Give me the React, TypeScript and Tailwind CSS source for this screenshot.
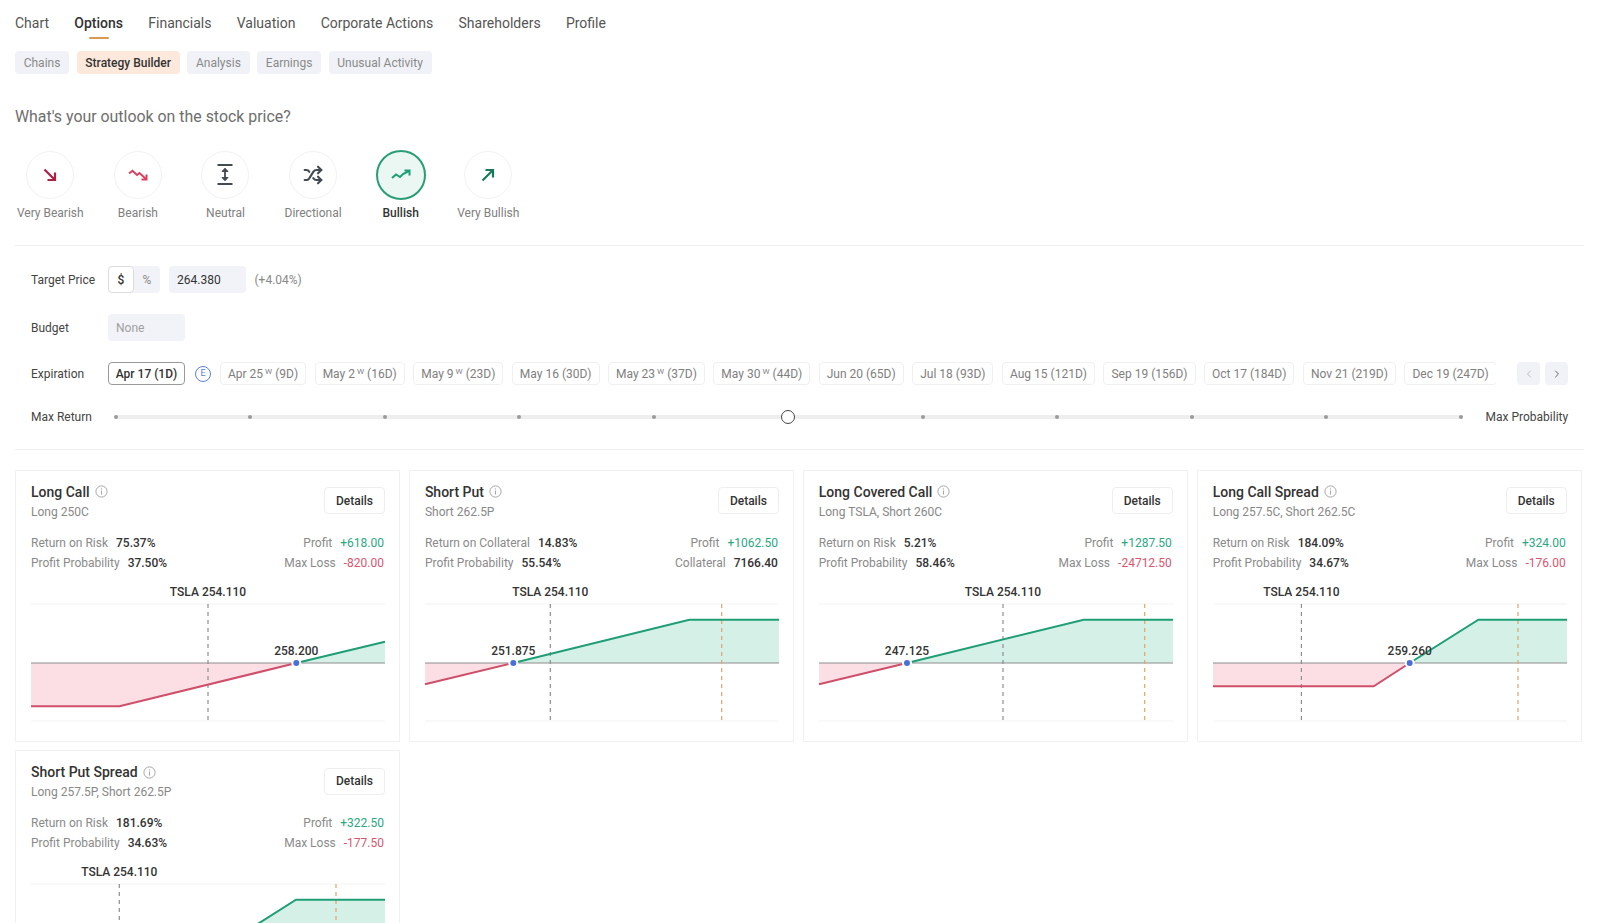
import React from "react";
import { Shuffle, ChevronLeft, ChevronRight } from "lucide-react";

type Pt = [number, number];
type CardData = {
  title: string;
  sub: string;
  m1: [string, string];
  m2: [string, string];
  r1: [string, string];
  r2: [string, string, "red" | "dark"];
  line: number;
  orange?: number;
  be: number;
  beText?: string;
  loss: Pt[];
  profit: Pt[];
};

const cards: CardData[] = [
  {
    title: "Long Call", sub: "Long 250C",
    m1: ["Return on Risk", "75.37%"], m2: ["Profit Probability", "37.50%"],
    r1: ["Profit", "+618.00"], r2: ["Max Loss", "-820.00", "red"],
    line: 177, be: 265.3, beText: "258.200",
    loss: [[0, 102.3], [88.5, 102.3], [265.3, 59]], profit: [[265.3, 59], [354, 37.7]],
  },
  {
    title: "Short Put", sub: "Short 262.5P",
    m1: ["Return on Collateral", "14.83%"], m2: ["Profit Probability", "55.54%"],
    r1: ["Profit", "+1062.50"], r2: ["Collateral", "7166.40", "dark"],
    line: 125.3, orange: 296.7, be: 88.3, beText: "251.875",
    loss: [[0, 80.3], [88.3, 59]], profit: [[88.3, 59], [264.3, 15.7], [354, 15.7]],
  },
  {
    title: "Long Covered Call", sub: "Long TSLA, Short 260C",
    m1: ["Return on Risk", "5.21%"], m2: ["Profit Probability", "58.46%"],
    r1: ["Profit", "+1287.50"], r2: ["Max Loss", "-24712.50", "red"],
    line: 184, orange: 325.7, be: 88, beText: "247.125",
    loss: [[0, 80.3], [88, 59]], profit: [[88, 59], [264.7, 15.7], [354, 15.7]],
  },
  {
    title: "Long Call Spread", sub: "Long 257.5C, Short 262.5C",
    m1: ["Return on Risk", "184.09%"], m2: ["Profit Probability", "34.67%"],
    r1: ["Profit", "+324.00"], r2: ["Max Loss", "-176.00", "red"],
    line: 88.4, orange: 305, be: 196.7, beText: "259.260",
    loss: [[0, 82.3], [160.7, 82.3], [196.7, 59]], profit: [[196.7, 59], [265.4, 15.7], [354, 15.7]],
  },
  {
    title: "Short Put Spread", sub: "Long 257.5P, Short 262.5P",
    m1: ["Return on Risk", "181.69%"], m2: ["Profit Probability", "34.63%"],
    r1: ["Profit", "+322.50"], r2: ["Max Loss", "-177.50", "red"],
    line: 88.3, orange: 305, be: 196.7,
    loss: [[0, 82.3], [160.7, 82.3], [196.7, 59]], profit: [[196.7, 59], [265, 15.7], [354, 15.7]],
  },
];

const fillPts = (p: Pt[]) =>
  [...p, [p[p.length - 1][0], 59] as Pt, [p[0][0], 59] as Pt].map((a) => a.join(",")).join(" ");
const linePts = (p: Pt[]) => p.map((a) => a.join(",")).join(" ");

function Chart({ c }: { c: CardData }) {
  const top = 20;
  const Y = (y: number) => y + top;
  return (
    <svg width="354" height="138" viewBox="0 0 354 138" className="mt-[11px] block overflow-visible">
      <g transform={`translate(0 ${top})`}>
        <line x1="0" x2="354" y1="0" y2="0" stroke="#f3f3f3" />
        <line x1="0" x2="354" y1="117" y2="117" stroke="#f3f3f3" />
        <polygon points={fillPts(c.loss)} fill="#fbdfe4" />
        <polygon points={fillPts(c.profit)} fill="#d5f0e6" />
        <line x1="0" x2="354" y1="59" y2="59" stroke="#8c8c8c" strokeWidth="1" />
        <line x1={c.line} x2={c.line} y1="0" y2="116" stroke="#8d8d96" strokeWidth="1.2" strokeDasharray="4 4" />
        {c.orange !== undefined && (
          <line x1={c.orange} x2={c.orange} y1="0" y2="118" stroke="#e2a565" strokeWidth="1.2" strokeDasharray="4 4" />
        )}
        <polyline points={linePts(c.loss)} fill="none" stroke="#cf4f6b" strokeWidth="2" />
        <polyline points={linePts(c.profit)} fill="none" stroke="#1f9e76" strokeWidth="2" />
        <circle cx={c.be} cy="59" r="5" fill="#ffffff" />
        <circle cx={c.be} cy="59" r="3" fill="#4a6fd8" />
        {c.beText && (
          <text x={c.be} y="50.5" textAnchor="middle" fontSize="12" fontWeight="500" fill="#333333" fontFamily="Roboto, sans-serif">
            {c.beText}
          </text>
        )}
      </g>
      <text x={c.line} y={Y(-8.3)} textAnchor="middle" fontSize="12" fontWeight="500" fill="#333333" fontFamily="Roboto, sans-serif">
        TSLA 254.110
      </text>
    </svg>
  );
}

function InfoIcon() {
  return (
    <svg width="13" height="13" viewBox="0 0 13 13" className="shrink-0">
      <circle cx="6.5" cy="6.5" r="5.6" fill="none" stroke="#a6a6a6" strokeWidth="1" />
      <line x1="6.5" x2="6.5" y1="5.6" y2="9.6" stroke="#a6a6a6" strokeWidth="1" />
      <circle cx="6.5" cy="3.9" r="0.7" fill="#a6a6a6" />
    </svg>
  );
}

function Metric({ a, tone }: { a: [string, string]; tone: string }) {
  return (
    <span className="flex gap-[8px]">
      <span className="text-[#8a8a8a]">{a[0]}</span>
      <span className={tone}>{a[1]}</span>
    </span>
  );
}

function Card({ c }: { c: CardData }) {
  return (
    <div className="w-[385px] border border-[#f1f1f1] bg-white pl-[15px] pr-[14px] pt-[11px] pb-[19px]">
      <div className="flex items-center justify-between">
        <div>
          <div className="flex h-[20px] items-center gap-[5px] text-[14px] leading-[20px] font-medium text-[#333333]">
            {c.title}
            <InfoIcon />
          </div>
          <div className="mt-[2px] text-[12px] leading-[16px] text-[#888888]">{c.sub}</div>
        </div>
        <button className="flex h-[27px] w-[61px] items-center justify-center rounded-[4px] border border-[#eeeeee] bg-white text-[12px] font-medium text-[#333333]">
          Details
        </button>
      </div>
      <div className="mt-[13px] flex items-start justify-between text-[12px] leading-[20px]">
        <div>
          <Metric a={c.m1} tone="font-medium text-[#333333]" />
          <Metric a={c.m2} tone="font-medium text-[#333333]" />
        </div>
        <div className="mr-[1px] flex flex-col items-end">
          <Metric a={c.r1} tone="text-[#2aa87f]" />
          <Metric a={[c.r2[0], c.r2[1]]} tone={c.r2[2] === "red" ? "text-[#d9566f]" : "font-medium text-[#333333]"} />
        </div>
      </div>
      <Chart c={c} />
    </div>
  );
}

const outlooks: { label: string; icon: React.ReactNode; active?: boolean }[] = [
  {
    label: "Very Bearish",
    icon: (
      <svg width="14" height="14" viewBox="0 0 14 14" fill="none" stroke="#b01e45" strokeWidth="2.2">
        <path d="M1.5 1.5 L12 12 M12 4.5 V12 H4.5" />
      </svg>
    ),
  },
  {
    label: "Bearish",
    icon: (
      <svg width="20" height="12" viewBox="0 0 20 12" fill="none" stroke="#d8405f" strokeWidth="2">
        <path d="M1 4.5 L4.5 1.8 L9 6 L11.5 4 L18 10" />
        <path d="M18.5 5.5 V10.5 H13.5" />
      </svg>
    ),
  },
  {
    label: "Neutral",
    icon: (
      <svg width="16" height="21" viewBox="0 0 16 21" fill="none" stroke="#444a52" strokeWidth="1.8">
        <path d="M0.5 1 H15.5 M0.5 20 H15.5 M8 6 V15" />
        <path d="M5 7.5 L8 4.2 L11 7.5 Z M5 13.5 L8 16.8 L11 13.5 Z" fill="#444a52" strokeWidth="1" />
      </svg>
    ),
  },
  { label: "Directional", icon: <Shuffle size={20} strokeWidth={2.5} color="#444a52" /> },
  {
    label: "Bullish",
    active: true,
    icon: (
      <svg width="20" height="12" viewBox="0 0 20 12" fill="none" stroke="#1f9e76" strokeWidth="2">
        <path d="M1 9 L5 5.5 L9 8 L12 5 L18 2" />
        <path d="M13.5 1.5 H18.5 V6.5" />
      </svg>
    ),
  },
  {
    label: "Very Bullish",
    icon: (
      <svg width="14" height="14" viewBox="0 0 14 14" fill="none" stroke="#157a5c" strokeWidth="2.2">
        <path d="M1.5 12.5 L12 2 M4.5 2 H12 V9.5" />
      </svg>
    ),
  },
];

const exps: [string, boolean, string][] = [
  ["Apr 25", true, "(9D)"],
  ["May 2", true, "(16D)"],
  ["May 9", true, "(23D)"],
  ["May 16", false, "(30D)"],
  ["May 23", true, "(37D)"],
  ["May 30", true, "(44D)"],
  ["Jun 20", false, "(65D)"],
  ["Jul 18", false, "(93D)"],
  ["Aug 15", false, "(121D)"],
  ["Sep 19", false, "(156D)"],
  ["Oct 17", false, "(184D)"],
  ["Nov 21", false, "(219D)"],
  ["Dec 19", false, "(247D)"],
];

const tabs = ["Chart", "Options", "Financials", "Valuation", "Corporate Actions", "Shareholders", "Profile"];
const pills = ["Chains", "Strategy Builder", "Analysis", "Earnings", "Unusual Activity"];

export default function App() {
  return (
    <div className="h-[923px] w-[1600px] overflow-hidden bg-white pl-[15px] font-[family-name:Roboto,sans-serif] text-[12px] text-[#333333]">
      <nav className="flex gap-[25.25px]">
        {tabs.map((t) => (
          <div
            key={t}
            className={`relative h-[39px] pt-[13px] text-[14px] leading-[20px] ${t === "Options" ? "font-medium text-[#333333]" : "text-[#555555]"}`}
          >
            {t}
            {t === "Options" && (
              <span className="absolute bottom-0 left-1/2 h-[2px] w-[20px] -translate-x-1/2 rounded-full bg-[#d99a4e]" />
            )}
          </div>
        ))}
      </nav>

      <div className="mt-[12px] flex gap-[7.6px]">
        {pills.map((p) => (
          <div
            key={p}
            className={`flex h-[23px] items-center rounded-[4px] px-[8.7px] text-[12px] ${p === "Strategy Builder" ? "bg-[#fde9dc] font-medium text-[#333333]" : "bg-[#f0f2f7] text-[#8a8a8a]"}`}
          >
            {p}
          </div>
        ))}
      </div>

      <h2 className="mt-[31px] text-[15.9px] leading-[24px] font-normal text-[#6e6e6e]">What's your outlook on the stock price?</h2>

      <div className="mt-[21.5px] -ml-[8.5px] flex">
        {outlooks.map((o) => (
          <div key={o.label} className="flex w-[87.6px] flex-col items-center">
            <div
              className={`flex items-center justify-center rounded-full ${o.active ? "h-[50px] w-[50px] -my-[1px] border-2 border-[#2a9d78] bg-[#eaf7f2]" : "h-[48px] w-[48px] border border-[#f2f2f2] bg-white"}`}
            >
              {o.icon}
            </div>
            <div className={`mt-[6.5px] text-[12px] leading-[16px] whitespace-nowrap ${o.active ? "font-medium text-[#333333]" : "text-[#808080]"}`}>
              {o.label}
            </div>
          </div>
        ))}
      </div>

      <div className="mt-[24px] h-px w-[1569px] bg-[#f0f0f0]" />

      <div className="mt-[20px] pl-[16px]">
        <div className="flex h-[27px] items-center">
          <div className="w-[77px] text-[#444444]">Target Price</div>
          <div className="flex h-[27px] w-[52px] rounded-[4px] bg-[#f1f3f8]">
            <div className="flex w-[26px] items-center justify-center rounded-[4px] border border-[#dddddd] bg-white font-medium text-[#333333]">$</div>
            <div className="flex w-[26px] items-center justify-center text-[#8a8a8a]">%</div>
          </div>
          <div className="ml-[9px] flex h-[27px] w-[77px] items-center rounded-[4px] bg-[#f1f3f8] pl-[8px] text-[#333333]">264.380</div>
          <div className="ml-[8.5px] text-[#888888]">(+4.04%)</div>
        </div>

        <div className="mt-[21px] flex h-[27px] items-center">
          <div className="w-[77px] text-[#444444]">Budget</div>
          <div className="flex h-[27px] w-[77px] items-center rounded-[4px] bg-[#f1f3f8] pl-[8px] text-[#a0a0a0]">None</div>
        </div>

        <div className="mt-[21px] flex h-[23px] items-center">
          <div className="w-[77px] text-[#444444]">Expiration</div>
          <div className="flex h-[23px] w-[77px] items-center justify-center rounded-[4px] border border-[#999999] bg-white font-medium text-[#333333]">
            Apr 17 (1D)
          </div>
          <div className="ml-[10px] mr-[9px] flex h-[16px] w-[16px] items-center justify-center rounded-full border border-[#5b7fd6] text-[9px] leading-none text-[#5b7fd6]">
            E
          </div>
          <div className="flex w-[1276px] gap-[8.5px] overflow-hidden">
            {exps.map(([d, w, n]) => (
              <div
                key={d}
                className="flex h-[23px] shrink-0 items-center gap-[3px] rounded-[4px] border border-[#f0f0f0] bg-white px-[7px] whitespace-nowrap text-[#808080]"
              >
                <span>
                  {d}
                  {w && <sup className="ml-[2px] text-[8px]">W</sup>}
                </span>
                <span>{n}</span>
              </div>
            ))}
          </div>
          <div className="ml-[21px] flex gap-[5px]">
            <div className="flex h-[23px] w-[23px] items-center justify-center rounded-[4px] bg-[#f0f2f7] text-[#bbbbbb]">
              <ChevronLeft size={12} />
            </div>
            <div className="flex h-[23px] w-[23px] items-center justify-center rounded-[4px] bg-[#f0f2f7] text-[#666666]">
              <ChevronRight size={12} />
            </div>
          </div>
        </div>

        <div className="mt-[24px] flex h-[16px] items-center">
          <div className="w-[84.5px] leading-[16px] text-[#444444]">Max Return</div>
          <div className="relative h-[4px] w-[1345.5px] rounded-full bg-[#eeeeee]">
            {Array.from({ length: 11 }).map((_, i) => (
              <span
                key={i}
                className="absolute top-1/2 h-[4px] w-[4px] -translate-x-1/2 -translate-y-1/2 rounded-full bg-[#9a9a9a]"
                style={{ left: `${i * 10}%` }}
              />
            ))}
            <span className="absolute top-1/2 left-1/2 h-[14px] w-[14px] -translate-x-1/2 -translate-y-1/2 rounded-full border-[1.5px] border-[#444444] bg-white" />
          </div>
          <div className="ml-[24.5px] leading-[16px] whitespace-nowrap text-[#444444]">Max Probability</div>
        </div>
      </div>

      <div className="mt-[24px] h-px w-[1569px] bg-[#f0f0f0]" />

      <div className="mt-[19.5px] flex w-[1567px] flex-wrap gap-x-[8.9px] gap-y-[8.5px]">
        {cards.map((c) => (
          <Card key={c.title} c={c} />
        ))}
      </div>
    </div>
  );
}
